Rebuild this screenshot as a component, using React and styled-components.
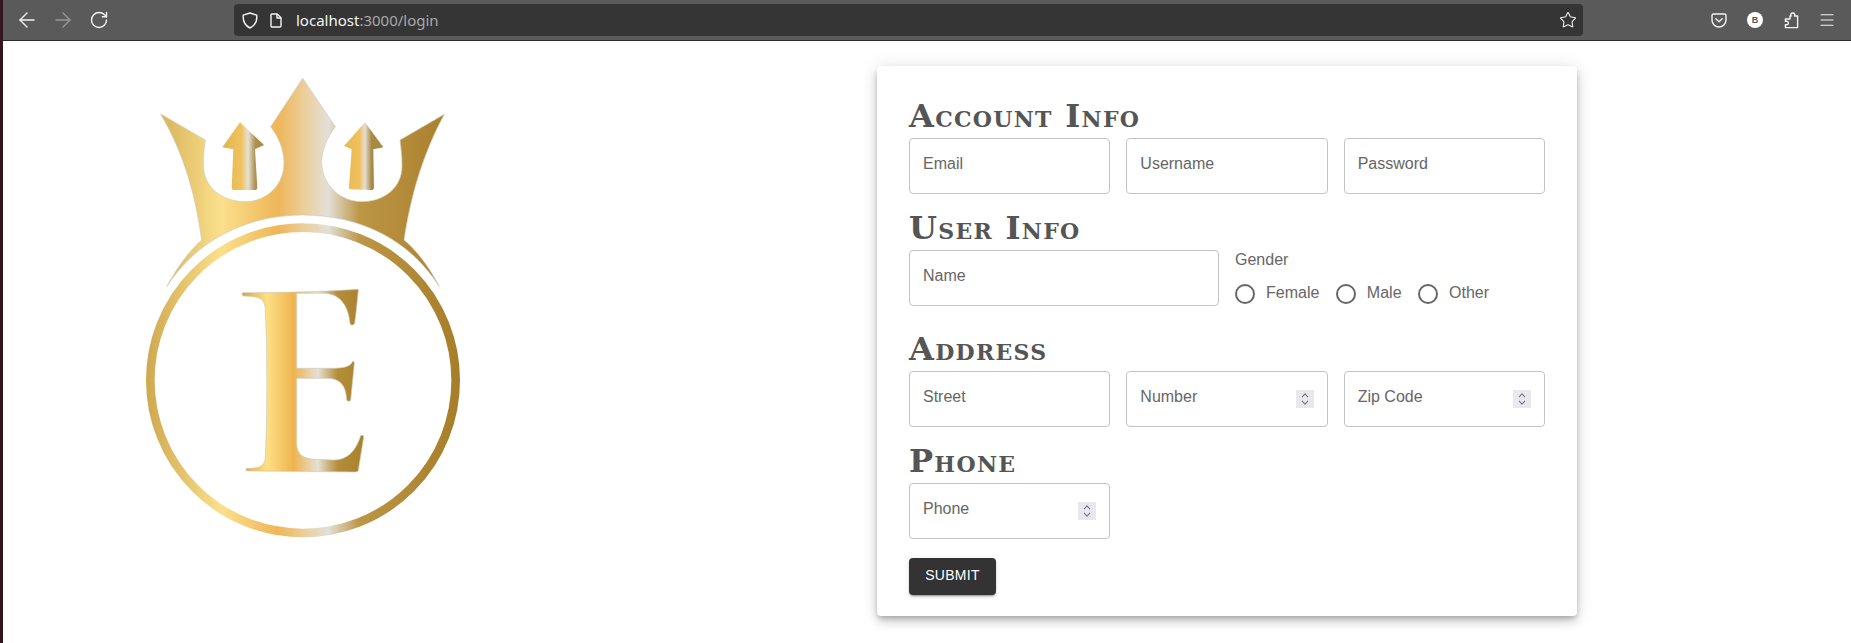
import React from 'react';
import styled, { createGlobalStyle } from 'styled-components';
import { ArrowLeft, ArrowRight, RotateCw, Star, Menu } from 'lucide-react';

const GlobalStyle = createGlobalStyle`
  html, body {
    margin: 0;
    padding: 0;
    background: #fff;
  }
  * {
    box-sizing: border-box;
  }
`;

const Screen = styled.div`
  height: 643px;
  overflow: hidden;
  border-left: 3px solid #33161f;
  font-family: "Liberation Sans", Arial, sans-serif;
`;

const Toolbar = styled.header`
  display: flex;
  align-items: center;
  height: 41px;
  padding: 0 6px;
  background: #5a5a5a;
  border-bottom: 1px solid #2b2b2b;
  color: #f4f4f4;
`;

const ToolGroup = styled.div`
  display: flex;
`;

const ToolButton = styled.div`
  display: flex;
  align-items: center;
  justify-content: center;
  width: 36px;
  height: 32px;
  opacity: ${props => (props.disabled ? 0.4 : 1)};
`;

const UrlBar = styled.div`
  display: flex;
  flex: 1;
  align-items: center;
  height: 32px;
  margin: 0 118px 0 117px;
  padding: 0 6px 0 8px;
  background: #353535;
  border-radius: 4px;
  font-family: "Noto Sans", sans-serif;
  font-size: 15px;
`;

const UrlIcon = styled.span`
  display: flex;
  width: ${props => props.width}px;
`;

const UrlHost = styled.span`
  color: #f4f4f4;
`;

const UrlRest = styled.span`
  flex: 1;
  color: #a8a8a8;
`;

const Avatar = styled.span`
  display: flex;
  align-items: center;
  justify-content: center;
  width: 16px;
  height: 16px;
  border-radius: 50%;
  background: #fff;
  color: #555;
  font-size: 9px;
  font-weight: bold;
`;

const Main = styled.main`
  display: flex;
  align-items: flex-start;
  justify-content: space-between;
  padding: 19px 274px 0 117px;
`;

const Logo = styled.svg`
  display: block;
  width: 360px;
  height: 490px;
`;

const Card = styled.form`
  width: 700px;
  margin-top: 6px;
  padding: 32px 32px 21px;
  background: #fff;
  border-radius: 4px;
  box-shadow: 0 3px 5px -1px rgba(0, 0, 0, 0.2), 0 6px 10px 0 rgba(0, 0, 0, 0.14), 0 1px 18px 0 rgba(0, 0, 0, 0.12);
`;

const Heading = styled.h2`
  height: 40px;
  margin: 0;
  color: #555;
  font-family: "DejaVu Serif", serif;
  font-size: 32px;
  font-weight: bold;
  font-variant: small-caps;
  line-height: 36px;
  letter-spacing: 1.3px;
  white-space: nowrap;
`;

const Row = styled.div`
  display: grid;
  grid-template-columns: repeat(${props => props.columns}, 1fr);
  gap: 16px;
  margin-bottom: 16px;
`;

const FieldBox = styled.div`
  position: relative;
  height: 56px;
`;

const FieldLabel = styled.label`
  position: absolute;
  top: 14px;
  left: 14px;
  color: #666;
  font-size: 16px;
  line-height: 23px;
  pointer-events: none;
`;

const FieldInput = styled.input`
  display: block;
  width: 100%;
  height: 56px;
  padding: 18px 14px;
  border: 1px solid #c4c4c4;
  border-radius: 4px;
  background: transparent;
  font-family: inherit;
  font-size: 16px;
  outline: none;
  appearance: textfield;

  &::-webkit-inner-spin-button {
    appearance: none;
  }
`;

const Spinner = styled.svg`
  position: absolute;
  top: 19px;
  right: 14px;
  width: 18px;
  height: 18px;
  background: #e9e9ed;
  pointer-events: none;
`;

const GenderGroup = styled.fieldset`
  height: 65px;
  margin: 0;
  padding: 0;
  border: 0;
`;

const GenderTitle = styled.legend`
  display: block;
  padding: 0;
  color: #666;
  font-size: 16px;
  line-height: 20px;
`;

const RadioRow = styled.div`
  display: flex;
  gap: 16.5px;
  margin-top: 12px;
`;

const RadioOption = styled.label`
  display: flex;
  align-items: center;
  gap: 11px;
  height: 22px;
  color: #666;
  font-size: 16px;
`;

const RadioInput = styled.input`
  appearance: none;
  flex: none;
  width: 20px;
  height: 20px;
  margin: 2px 0 0;
  border: 2px solid #666;
  border-radius: 50%;
`;

const SubmitButton = styled.button`
  display: block;
  width: 87px;
  height: 37px;
  margin-top: 19px;
  padding: 0 0 4px;
  border: 0;
  border-radius: 4px;
  background: #333;
  color: #fff;
  font-family: inherit;
  font-size: 14px;
  letter-spacing: 0.3px;
  box-shadow: 0 3px 1px -2px rgba(0, 0, 0, 0.2), 0 2px 2px 0 rgba(0, 0, 0, 0.14), 0 1px 5px 0 rgba(0, 0, 0, 0.12);
`;

const ShieldIcon = () => (
  <svg width="16" height="17" viewBox="0 0 16 17" fill="none" stroke="#f4f4f4" strokeWidth="1.4" strokeLinejoin="round">
    <path d="M8 1 L14.8 3.2 C15.2 9 13 13.6 8 16 C3 13.6 0.8 9 1.2 3.2 Z" />
  </svg>
);

const PageIcon = () => (
  <svg width="12" height="15" viewBox="0 0 12 15" fill="none" stroke="#f4f4f4" strokeWidth="1.4" strokeLinejoin="round">
    <path d="M1.7 1 H7.2 L11 4.8 V12.8 C11 13.5 10.5 14 9.8 14 H2.2 C1.5 14 1 13.5 1 12.8 V1.7 C1 1.3 1.3 1 1.7 1 Z" />
    <path d="M7 1 V5 H11" />
  </svg>
);

const PocketIcon = () => (
  <svg width="16" height="15" viewBox="0 0 16 15" fill="none" stroke="#f4f4f4" strokeWidth="1.4" strokeLinecap="round" strokeLinejoin="round">
    <path d="M2.4 1 H13.6 C14.4 1 15 1.6 15 2.4 V7 C15 11 11.8 14 8 14 C4.2 14 1 11 1 7 V2.4 C1 1.6 1.6 1 2.4 1 Z" />
    <path d="M4.8 5.8 L8 8.8 L11.2 5.8" />
  </svg>
);

const PuzzleIcon = () => (
  <svg width="15" height="17" viewBox="0 0 15 17" fill="none" stroke="#f4f4f4" strokeWidth="1.4" strokeLinejoin="round">
    <path d="M6 4 H7.2 C6.2 2.2 7.2 1 8.8 1 C10.4 1 11.4 2.2 10.4 4 H13.6 V15.6 H1.4 V12.6 C3.4 13.2 4.4 12.2 4.4 11 C4.4 9.8 3.4 8.8 1.4 9.4 V7 H6 Z" />
  </svg>
);

const crownPath = `M548 55 L646 200 C620 235 605 270 605 310 C608 375 660 425 725 425 C795 425 848 380 846 315
  C846 290 843 265 840 240 L973 163 C915 270 875 390 852 540 C890 570 930 625 958 680
  C870 540 720 465 548 465 C380 465 230 540 140 680 C170 625 205 575 245 540
  C225 390 185 270 122 162 L256 240 C252 265 250 290 250 315 C250 380 305 425 375 425
  C440 425 492 375 492 310 C492 270 478 235 452 200 Z`;

const letterPath = `M368 698 C480 698 600 696 715 688 C712 725 708 760 704 790 C700 797 692 797 690 790
  C686 745 665 700 610 700 L530 700 L530 925 L630 925 C670 925 692 920 697 905 C700 903 703 905 703 910
  L692 1020 C690 1025 682 1025 680 1020 C678 975 660 955 620 955 L530 955 L530 1150
  C530 1185 550 1197 590 1198 L640 1200 C685 1200 708 1170 722 1127 C726 1124 732 1127 731 1132
  L715 1230 C714 1235 710 1236 705 1236 L382 1233 C376 1233 376 1225 382 1225
  C425 1225 434 1215 436 1190 C442 1060 442 880 436 750 C434 715 420 710 372 708 C365 706 365 700 368 698 Z`;

const leftArrowPath = 'M360 187 L432 255 L405 268 L412 383 C412 388 408 390 404 390 L342 390 C338 390 335 388 335 384 L340 268 L307 262 Z';
const rightArrowPath = 'M735 187 L790 262 L760 268 L762 383 C762 388 758 390 754 390 L692 388 C688 388 686 385 687 382 L695 268 L672 258 Z';

const GradientStops = ({ stops }) => stops.map(([offset, color]) => (
  <stop key={offset} offset={offset} stopColor={color} />
));

const goldStops = [
  ['0%', '#cfa84f'], ['24%', '#fbe08b'], ['42%', '#eeb658'], ['50%', '#ebcd96'],
  ['58%', '#e3e0d8'], ['68%', '#bd9646'], ['100%', '#a67d29'],
];
const letterStops = [
  ['0%', '#d5a83f'], ['20%', '#fde084'], ['42%', '#efb44f'], ['62%', '#e4e0d4'],
  ['78%', '#b58e3a'], ['100%', '#a9812c'],
];
const leftArrowStops = [['0%', '#e0b54f'], ['46%', '#f0c35f'], ['62%', '#e5e0d5'], ['78%', '#b09355'], ['100%', '#a5853f']];
const rightArrowStops = [['0%', '#e8b850'], ['40%', '#f0c060'], ['53%', '#e6e0d5'], ['70%', '#a88a45'], ['100%', '#a88a45']];

const CrownLogo = () => (
  <Logo viewBox="0 0 1080 1470">
    <defs>
      <linearGradient id="gold" gradientUnits="userSpaceOnUse" x1="78" y1="0" x2="1020" y2="0">
        <GradientStops stops={goldStops} />
      </linearGradient>
      <linearGradient id="letter" gradientUnits="userSpaceOnUse" x1="368" y1="0" x2="732" y2="0">
        <GradientStops stops={letterStops} />
      </linearGradient>
      <linearGradient id="arrowLeft" gradientUnits="userSpaceOnUse" x1="307" y1="0" x2="432" y2="0">
        <GradientStops stops={leftArrowStops} />
      </linearGradient>
      <linearGradient id="arrowRight" gradientUnits="userSpaceOnUse" x1="672" y1="0" x2="790" y2="0">
        <GradientStops stops={rightArrowStops} />
      </linearGradient>
    </defs>
    <circle cx="549" cy="961" r="458" fill="none" stroke="url(#gold)" strokeWidth="26" />
    <path d={crownPath} fill="url(#gold)" stroke="#cfcabd" strokeWidth="2" />
    <path d={leftArrowPath} fill="url(#arrowLeft)" />
    <path d={rightArrowPath} fill="url(#arrowRight)" />
    <path d={letterPath} fill="url(#letter)" stroke="#cfcabd" strokeWidth="2" />
  </Logo>
);

const Field = ({ label, type = 'text' }) => (
  <FieldBox>
    <FieldLabel>{label}</FieldLabel>
    <FieldInput type={type} aria-label={label} />
    {type === 'number' && (
      <Spinner viewBox="0 0 18 18" fill="none" stroke="#7a7a82" strokeWidth="1.2">
        <path d="M6 7.2 L9 3.8 L12 7.2" />
        <path d="M6 10.8 L9 14.2 L12 10.8" />
      </Spinner>
    )}
  </FieldBox>
);

const Radio = ({ label }) => (
  <RadioOption>
    <RadioInput type="radio" name="gender" />
    {label}
  </RadioOption>
);

const App = () => (
  <Screen>
    <GlobalStyle />
    <Toolbar>
      <ToolGroup>
        <ToolButton><ArrowLeft size={24} strokeWidth={1.4} /></ToolButton>
        <ToolButton disabled><ArrowRight size={24} strokeWidth={1.4} /></ToolButton>
        <ToolButton><RotateCw size={20} strokeWidth={1.7} /></ToolButton>
      </ToolGroup>
      <UrlBar>
        <UrlIcon width={28}><ShieldIcon /></UrlIcon>
        <UrlIcon width={26}><PageIcon /></UrlIcon>
        <UrlHost>localhost</UrlHost>
        <UrlRest>:3000/login</UrlRest>
        <Star size={18} strokeWidth={1.4} />
      </UrlBar>
      <ToolGroup>
        <ToolButton><PocketIcon /></ToolButton>
        <ToolButton><Avatar>B</Avatar></ToolButton>
        <ToolButton><PuzzleIcon /></ToolButton>
        <ToolButton><Menu size={18} strokeWidth={1.4} /></ToolButton>
      </ToolGroup>
    </Toolbar>
    <Main>
      <CrownLogo />
      <Card onSubmit={e => e.preventDefault()}>
        <Heading>Account Info</Heading>
        <Row columns={3}>
          <Field label="Email" />
          <Field label="Username" />
          <Field label="Password" />
        </Row>
        <Heading>User Info</Heading>
        <Row columns={2}>
          <Field label="Name" />
          <GenderGroup>
            <GenderTitle>Gender</GenderTitle>
            <RadioRow>
              <Radio label="Female" />
              <Radio label="Male" />
              <Radio label="Other" />
            </RadioRow>
          </GenderGroup>
        </Row>
        <Heading>Address</Heading>
        <Row columns={3}>
          <Field label="Street" />
          <Field label="Number" type="number" />
          <Field label="Zip Code" type="number" />
        </Row>
        <Heading>Phone</Heading>
        <Row columns={3}>
          <Field label="Phone" type="number" />
        </Row>
        <SubmitButton type="submit">SUBMIT</SubmitButton>
      </Card>
    </Main>
  </Screen>
);

export default App;
